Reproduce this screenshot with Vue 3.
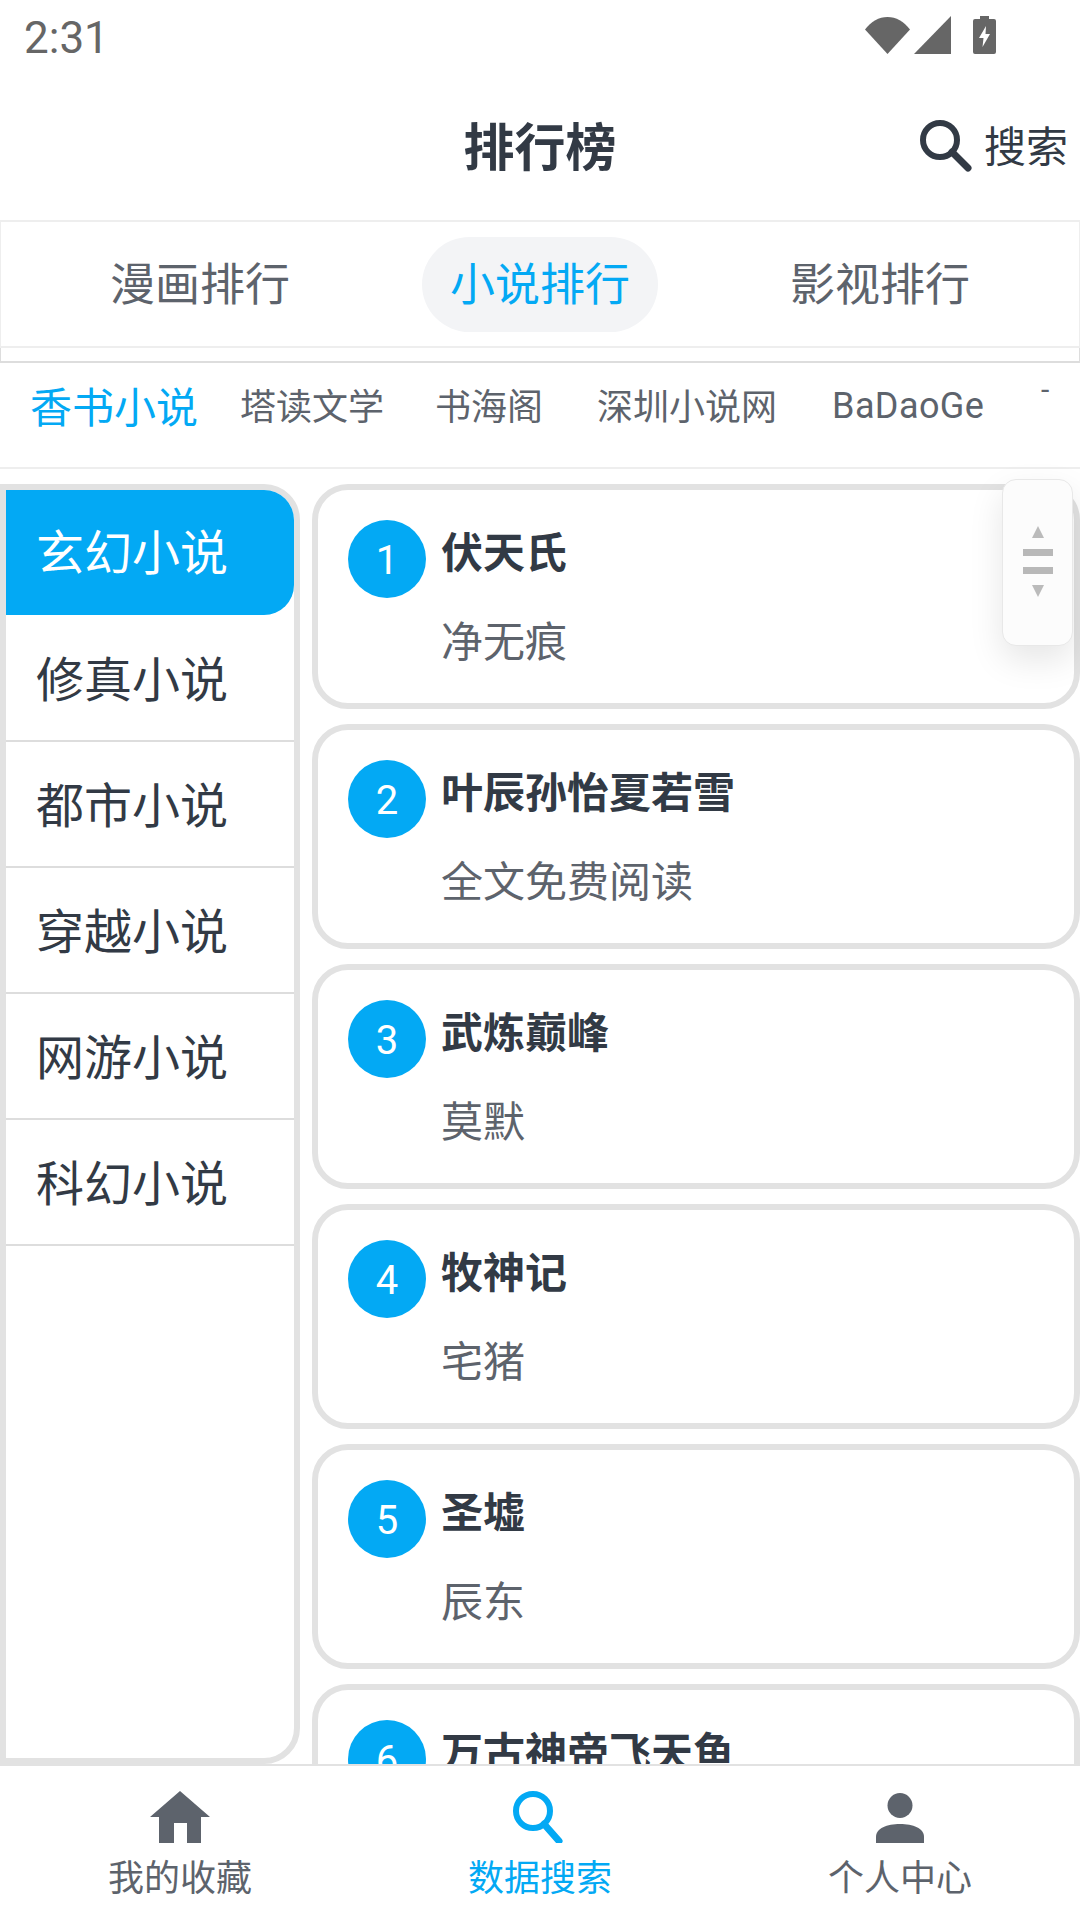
<template>
  <div class="page">
    <div class="status">
      <span class="time">2:31</span>
      <div class="status-icons">
        <svg width="45" height="38" viewBox="0 0 45 38"><path d="M0 13.5C6 5.500 14 1 22.500 1S39 5.500 45 13.500L22.500 38Z" fill="#666" /></svg>
        <svg width="37" height="38" viewBox="0 0 37 38"><path d="M37 0V38H0Z" fill="#666" /></svg>
        <svg width="23" height="38" viewBox="0 0 23 38"><path d="M7 0H16V3H21Q23 3 23 5V36Q23 38 21 38H2Q0 38 0 36V5Q0 3 2 3H7Z" fill="#666" /><path d="M13 10L6 22H10.500L9.500 31L17 18H12.500Z" fill="#fff" /></svg>
      </div>
    </div>

    <div class="header">
      <span class="title">排行榜</span>
      <div class="search">
        <svg width="52" height="52" viewBox="0 0 52 52"><circle cx="20" cy="20" r="17" fill="none" stroke="#323a45" stroke-width="6" /><path d="M32 32L48 48" stroke="#323a45" stroke-width="7" stroke-linecap="round" /></svg>
        <span>搜索</span>
      </div>
    </div>

    <div class="tabs">
      <span v-for="t in tabs" :key="t" class="tab" :class="{ on: t === '小说排行' }">{{ t }}</span>
    </div>
    <div class="tabs-gap"></div>

    <div class="sources">
      <span v-for="(s, i) in sources" :key="s" class="source" :class="{ on: i === 0 }">{{ s }}</span>
      <span class="more">-</span>
    </div>

    <div class="main">
      <div class="side">
        <div v-for="(c, i) in cats" :key="c" class="cat" :class="{ on: i === 0 }">{{ c }}</div>
      </div>
      <div class="list">
        <div v-for="(b, i) in books" :key="b.name" class="card">
          <div class="num">{{ i + 1 }}</div>
          <div class="info">
            <div class="name">{{ b.name }}</div>
            <div class="author">{{ b.author }}</div>
          </div>
        </div>
      </div>
      <div class="handle">
        <i class="up"></i>
        <i class="bar"></i>
        <i class="bar"></i>
        <i class="down"></i>
      </div>
    </div>

    <div class="nav">
      <div class="nav-item">
        <svg width="60" height="52" viewBox="0 0 60 52"><path d="M30 0L60 26H51V52H37V32H24V52H9V26H0Z" fill="#5d636c" /></svg>
        <span>我的收藏</span>
      </div>
      <div class="nav-item on">
        <svg width="60" height="52" viewBox="0 0 60 52"><circle cx="23" cy="20" r="17" fill="none" stroke="#03a9f4" stroke-width="6" /><path d="M34 33L49 50" stroke="#03a9f4" stroke-width="7" stroke-linecap="round" /></svg>
        <span>数据搜索</span>
      </div>
      <div class="nav-item">
        <svg width="60" height="52" viewBox="0 0 60 52"><ellipse cx="30" cy="14.500" rx="12.500" ry="12.500" fill="#5d636c" /><path d="M6 52V46C6 37 17 33 30 33S54 37 54 46V52Z" fill="#5d636c" /></svg>
        <span>个人中心</span>
      </div>
    </div>
  </div>
</template>

<script setup>
const tabs = ['漫画排行', '小说排行', '影视排行']
const sources = ['香书小说', '塔读文学', '书海阁', '深圳小说网', 'BaDaoGe']
const cats = ['玄幻小说', '修真小说', '都市小说', '穿越小说', '网游小说', '科幻小说']
const books = [
  { name: '伏天氏', author: '净无痕' },
  { name: '叶辰孙怡夏若雪', author: '全文免费阅读' },
  { name: '武炼巅峰', author: '莫默' },
  { name: '牧神记', author: '宅猪' },
  { name: '圣墟', author: '辰东' },
  { name: '万古神帝飞天鱼', author: '飞天鱼' },
]
</script>

<style>
body {
  background: #fff;
}
</style>

<style scoped>
.page {
  width: 1080px;
  height: 1920px;
  display: flex;
  flex-direction: column;
  overflow: hidden;
  background: #fff;
  font-family: Roboto, "Noto Sans CJK SC", sans-serif;
  color: #323a45;
}
.status {
  height: 72px;
  flex: none;
  display: flex;
  align-items: flex-start;
  justify-content: space-between;
  padding: 16px 84px 0 24px;
  box-sizing: border-box;
}
.time {
  font-size: 44px;
  line-height: 44px;
  color: #666;
}
.status-icons {
  display: flex;
  align-items: flex-start;
  gap: 4px;
}
.status-icons svg:last-child {
  margin-left: 18px;
}
.header {
  position: relative;
  height: 148px;
  flex: none;
  display: flex;
  align-items: center;
  justify-content: center;
  padding-bottom: 4px;
  box-sizing: border-box;
}
.title {
  font-size: 51px;
  font-weight: 700;
}
.search {
  position: absolute;
  right: 12px;
  top: 47px;
  display: flex;
  align-items: center;
  gap: 12px;
  font-size: 42px;
  line-height: 48px;
}
.search span {
  padding-top: 5px;
}
.tabs {
  height: 128px;
  flex: none;
  box-sizing: border-box;
  border: 1px solid #eee;
  border-width: 2px 1px;
  display: flex;
  align-items: center;
  justify-content: center;
  gap: 104px;
}
.tab {
  width: 236px;
  height: 95px;
  border-radius: 48px;
  display: flex;
  align-items: center;
  justify-content: center;
  font-size: 45px;
  color: #5d636c;
  padding-bottom: 6px;
  box-sizing: border-box;
}
.tab.on {
  color: #03a9f4;
  background: #f3f4f6;
}
.tabs-gap {
  height: 15px;
  flex: none;
  box-sizing: border-box;
  border: 1px solid #ddd;
  border-width: 0 1px 2px;
}
.sources {
  position: relative;
  height: 106px;
  flex: none;
  box-sizing: border-box;
  border-bottom: 2px solid #eee;
  display: flex;
  align-items: center;
  padding: 0 0 22px 30px;
  gap: 55px;
}
.source {
  font-size: 36px;
  color: #5d636c;
  white-space: nowrap;
}
.source:nth-child(2) {
  margin-right: -4px;
}
.source:nth-child(3) {
  margin-right: -1px;
}
.source:nth-child(5) {
  letter-spacing: 0.4px;
  margin-top: 3px;
}
.source.on {
  font-size: 42px;
  color: #03a9f4;
  margin-right: -13px;
}
.more {
  position: absolute;
  left: 1041px;
  top: 9px;
  font-size: 30px;
  color: #5d636c;
}
.main {
  position: relative;
  flex: 1;
  min-height: 0;
  margin-top: 15px;
  display: flex;
  gap: 12px;
}
.side {
  width: 300px;
  flex: none;
  box-sizing: border-box;
  border: 6px solid #e2e2e2;
  border-radius: 0 36px 36px 0;
}
.cat {
  height: 126px;
  box-sizing: border-box;
  border-bottom: 2px solid #ddd;
  display: flex;
  align-items: center;
  padding: 0 0 4px 30px;
  font-size: 48px;
  color: #323a45;
}
.cat.on {
  background: #03a9f4;
  color: #fff;
  border-bottom: none;
  border-radius: 0 30px 30px 0;
  height: 125px;
  margin-bottom: 1px;
  padding-bottom: 8px;
}
.list {
  flex: 1;
  min-width: 0;
  display: flex;
  flex-direction: column;
  gap: 15px;
  overflow: hidden;
}
.card {
  height: 225px;
  flex: none;
  box-sizing: border-box;
  border: 6px solid #e2e2e2;
  border-radius: 36px;
  display: flex;
  padding: 30px 30px 0;
  gap: 15px;
}
.num {
  width: 78px;
  height: 78px;
  border-radius: 50%;
  background: #03a9f4;
  color: #fff;
  font-size: 40px;
  padding-top: 2px;
  box-sizing: border-box;
  display: flex;
  align-items: center;
  justify-content: center;
}
.name {
  font-size: 42px;
  font-weight: 700;
  line-height: 60px;
  margin-top: 4px;
}
.author {
  font-size: 42px;
  line-height: 60px;
  margin-top: 29px;
  color: #5d636c;
}
.handle {
  position: absolute;
  right: 7px;
  top: -5px;
  width: 71px;
  height: 167px;
  box-sizing: border-box;
  background: #fcfcfc;
  border: 1px solid #e8e8e8;
  border-radius: 14px;
  box-shadow: 0 14px 34px rgba(0, 0, 0, 0.1);
  display: flex;
  flex-direction: column;
  align-items: center;
  padding-top: 46px;
}
.handle i {
  display: block;
}
.up {
  width: 0;
  height: 0;
  border-left: 6px solid transparent;
  border-right: 6px solid transparent;
  border-bottom: 12px solid #bbb;
}
.down {
  width: 0;
  height: 0;
  border-left: 6px solid transparent;
  border-right: 6px solid transparent;
  border-top: 12px solid #bbb;
  margin-top: 11px;
}
.bar {
  width: 30px;
  height: 7px;
  background: #b8b8b8;
  margin-top: 11px;
}
.nav {
  height: 156px;
  flex: none;
  box-sizing: border-box;
  border-top: 2px solid #e2e2e2;
  display: flex;
  background: #fff;
  position: relative;
}
.nav-item {
  flex: 1;
  display: flex;
  flex-direction: column;
  align-items: center;
  padding-top: 25px;
  font-size: 36px;
  color: #5d636c;
}
.nav-item span {
  margin-top: 12px;
  line-height: 48px;
}
.nav-item.on {
  color: #03a9f4;
}
</style>
